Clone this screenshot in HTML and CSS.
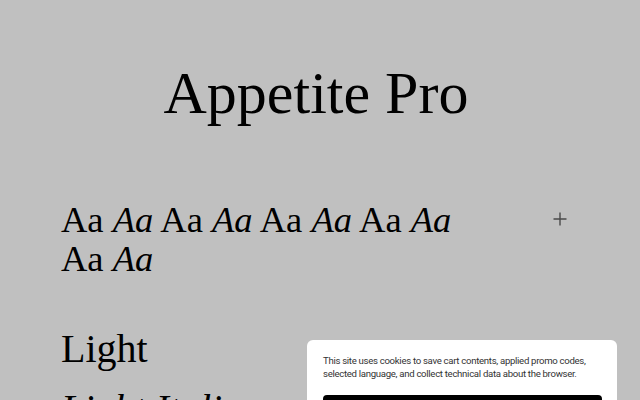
FILE: index.html
```html
<!DOCTYPE html>
<html lang="en">
<head>
<meta charset="utf-8">
<title>Appetite Pro</title>
<link rel="stylesheet" href="styles.css">
</head>
<body>
<main class="page">
  <h1 class="title">Appetite Pro</h1>
  <section class="glyphs-row">
    <p class="glyphs">
      <span class="pair">Aa <i>Aa</i></span>
      <span class="pair">Aa <i>Aa</i></span>
      <span class="pair">Aa <i>Aa</i></span>
      <span class="pair">Aa <i>Aa</i></span>
      <span class="pair">Aa <i>Aa</i></span>
    </p>
    <button class="plus" aria-label="Expand">
      <svg width="14" height="14" viewBox="0 0 14 14"><path d="M7 0.5V13.5M0.5 7H13.5" stroke="#4a4a4a" stroke-width="1.4" fill="none"/></svg>
    </button>
  </section>
  <section class="styles">
    <p class="style-name">Light</p>
    <p class="style-name italic">Light Italic</p>
    <p class="style-name">Regular</p>
  </section>
</main>
<div class="cookie">
  <p class="cookie-text">This site uses cookies to save cart contents, applied promo codes, selected language, and collect technical data about the browser.</p>
  <button class="cookie-btn">Accept</button>
</div>
</body>
</html>
```
FILE: styles.css
```css
html, body {
  margin: 0;
  padding: 0;
  height: 100%;
  overflow: hidden;
}
body {
  background: #c0c0c0;
  color: #000;
  font-family: "Liberation Serif", "Times New Roman", serif;
}
.page {
  padding: 60px 73px 0 61px;
}
.title {
  margin: 0;
  font-weight: normal;
  font-size: 60px;
  line-height: 66px;
  text-align: center;
  padding-left: 4px;
}
.glyphs-row {
  display: flex;
  align-items: flex-start;
  justify-content: space-between;
  margin-top: 74px;
}
.glyphs {
  margin: 0;
  width: 470px;
  font-size: 36.5px;
  line-height: 39px;
}
.pair {
  white-space: nowrap;
}
.pair i {
  font-style: italic;
}
.plus {
  border: 0;
  background: none;
  padding: 0;
  margin-top: 12px;
  width: 14px;
  height: 14px;
  display: flex;
}
.styles {
  margin-top: 47px;
}
.style-name {
  margin: 0 0 13px;
  font-size: 40px;
  line-height: 47px;
}
.style-name.italic {
  font-style: italic;
}
.cookie {
  position: fixed;
  left: 307px;
  top: 340px;
  width: 310px;
  box-sizing: border-box;
  background: #fff;
  border-radius: 6px;
  padding: 14px 15px 16px 16px;
  font-family: Roboto, "Liberation Sans", sans-serif;
}
.cookie-text {
  margin: 0;
  font-size: 9.6px;
  line-height: 13px;
  letter-spacing: -0.3px;
  color: #333;
}
.cookie-btn {
  margin-top: 15px;
  width: 100%;
  height: 40px;
  border: 0;
  border-radius: 4px;
  background: #000;
  color: #fff;
  font-family: inherit;
  font-size: 12px;
}
```
